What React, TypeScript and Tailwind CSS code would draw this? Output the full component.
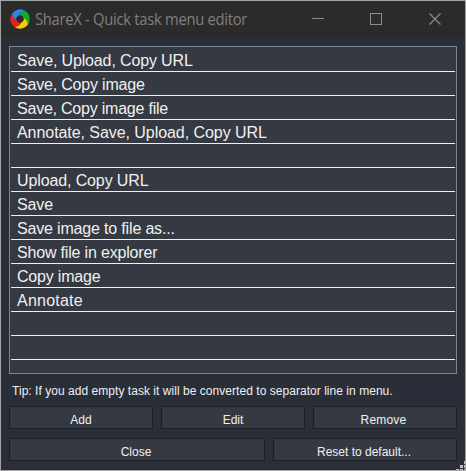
const tasks = [
  { name: 'Save, Upload, Copy URL', tracking: 'tracking-[-0.14px]' },
  { name: 'Save, Copy image', tracking: 'tracking-[-0.19px]' },
  { name: 'Save, Copy image file', tracking: 'tracking-[-0.22px]' },
  { name: 'Annotate, Save, Upload, Copy URL', tracking: 'tracking-[-0.06px]' },
  { name: '', tracking: '' },
  { name: 'Upload, Copy URL', tracking: 'tracking-[-0.12px]' },
  { name: 'Save', tracking: 'tracking-[-0.1px]' },
  { name: 'Save image to file as...', tracking: 'tracking-[-0.17px]' },
  { name: 'Show file in explorer', tracking: 'tracking-[-0.18px]' },
  { name: 'Copy image', tracking: 'tracking-[-0.2px]' },
  { name: 'Annotate', tracking: 'tracking-[0.22px]' },
  { name: '', tracking: '' },
  { name: '', tracking: '' },
];

const petals = [
  { color: '#2b86ee', angle: 0 },
  { color: '#10ae28', angle: 90 },
  { color: '#f8c80c', angle: 180 },
  { color: '#ec1f1c', angle: 270 },
];

function Logo() {
  return (
    <svg className="mb-px size-5 shrink-0" viewBox="-10 -10 20 20">
      {petals.map(({ color, angle }) => (
        <path
          key={color}
          transform={`rotate(${angle})`}
          fill={color}
          d="M-8 -5.5A9.7 9.7 0 0 1 5.5 -8C3 -7.8 0 -6.2 -1.2 -3.5A3.7 3.7 0 0 0 -3.5 1.2C-6.2 0 -7.8 -3 -8 -5.5Z"
        />
      ))}
    </svg>
  );
}

function Button({ label, className }: { label: string; className: string }) {
  return (
    <button className={`h-[23px] border border-[#1c2028] bg-[#353942] pt-1 text-center leading-[18px] ${className}`}>
      {label}
    </button>
  );
}

export default function App() {
  return (
    <div className="relative flex h-[471px] w-[466px] flex-col overflow-hidden border border-[#a3a3a3] bg-[#2a2e38] font-['Liberation_Sans',Arial,sans-serif] text-[#f0f0f0]">
      <header className="flex h-[37px] shrink-0 items-center bg-[#2b2b2b] pl-[9px] text-[#808080]">
        <Logo />
        <h1 className="mb-px ml-[5px] grow origin-left scale-x-[0.922] whitespace-nowrap font-['Open_Sans','Noto_Sans',sans-serif] text-[16px] leading-5 tracking-[-0.3px]">
          ShareX - Quick task menu editor
        </h1>
        <svg className="mb-px mr-[23px] h-3 w-[130px] shrink-0" viewBox="0 0 130 12" fill="none" stroke="#8c8c8c">
          <path d="M0 5.5H12M58.5.5H69.5V11.5H58.5Z" shapeRendering="crispEdges" />
          <path d="M117.5.5L128.5 11.5M128.5.5L117.5 11.5" strokeWidth="1.2" />
        </svg>
      </header>
      <main className="flex flex-col pl-2 pr-2 pt-2">
        <ul className="h-[328px] overflow-hidden border border-[#80848c] bg-[#353942] px-px pt-px text-[16px]">
          {tasks.map(({ name, tracking }, i) => (
            <li key={i} className={`h-6 whitespace-pre border-b border-[#f0f0f0] pl-[6px] pt-[3px] leading-[20px] ${tracking}`}>
              {name}
            </li>
          ))}
        </ul>
        <p className="ml-[3px] mt-[9px] h-[23px] whitespace-nowrap text-[12px] leading-4 tracking-[0.04px]">
          Tip: If you add empty task it will be converted to separator line in menu.
        </p>
        <div className="flex gap-2 text-[12px]">
          <Button label="Add" className="w-36" />
          <Button label="Edit" className="w-36" />
          <Button label="Remove" className="w-36 pr-[3px] tracking-[0.2px]" />
        </div>
        <div className="mt-[9px] flex gap-2 text-[12px]">
          <Button label="Close" className="w-64 pr-0.5" />
          <Button label="Reset to default..." className="w-[184px] pr-0.5" />
        </div>
      </main>
      <svg className="absolute -bottom-px -right-px size-[10px]" viewBox="0 0 10 10" fill="#c0c0c0" shapeRendering="crispEdges">
        <path d="M8 0h2v3H8ZM4 4h3v3H4ZM8 4h2v3H8ZM0 8h3v2H0ZM4 8h3v2H4ZM8 8h2v2H8Z" />
      </svg>
    </div>
  );
}
